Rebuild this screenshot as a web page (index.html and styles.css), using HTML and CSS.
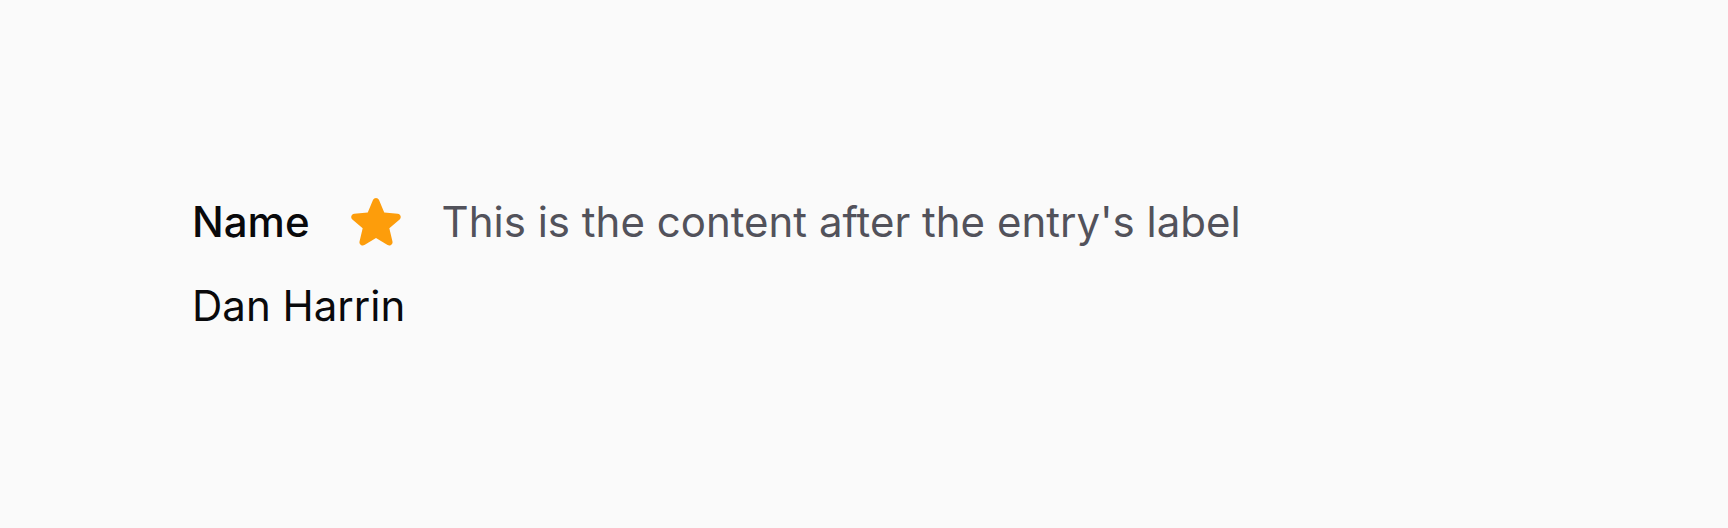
FILE: index.html
```html
<!DOCTYPE html>
<html lang="en">
<head>
<meta charset="utf-8">
<title>Entry</title>
<link rel="stylesheet" href="styles.css">
</head>
<body>
<div class="page">
  <div class="entry">
    <div class="entry-label-row">
      <span class="entry-label">Name</span>
      <svg class="entry-icon" viewBox="0 0 24 24" aria-hidden="true"><path fill-rule="evenodd" d="M10.788 3.21c.448-1.077 1.976-1.077 2.424 0l2.082 5.006 5.404.434c1.164.093 1.636 1.545.749 2.305l-4.117 3.527 1.257 5.273c.271 1.136-.964 2.033-1.960 1.425L12 18.354 7.373 21.18c-.996.608-2.231-.29-1.960-1.425l1.257-5.273-4.117-3.527c-.887-.76-.415-2.212.749-2.305l5.404-.434 2.082-5.005Z" clip-rule="evenodd"/></svg>
      <span class="entry-after">This is the content after the entry's label</span>
    </div>
    <div class="entry-value">Dan Harrin</div>
  </div>
</div>
</body>
</html>
```
FILE: styles.css
```css
html, body {
  margin: 0;
  padding: 0;
  background: #fafafa;
}
body {
  font-family: Inter, "Noto Sans", sans-serif;
  color: #09090b;
}
.page {
  width: 1728px;
  height: 528px;
  box-sizing: border-box;
  display: flex;
  align-items: center;
  padding-left: 192px;
}
.entry {
  display: flex;
  flex-direction: column;
  align-items: flex-start;
  gap: 24px;
}
.entry-label-row {
  display: flex;
  align-items: center;
  gap: 36px;
}
.entry-label {
  font-size: 42px;
  font-weight: 500;
  line-height: 60px;
  color: #09090b;
}
.entry-icon {
  width: 60px;
  height: 60px;
  fill: #fd9d0b;
  flex: none;
}
.entry-after {
  font-size: 42px;
  line-height: 60px;
  color: #52525b;
}
.entry-value {
  font-size: 42px;
  line-height: 60px;
  color: #09090b;
}
```
